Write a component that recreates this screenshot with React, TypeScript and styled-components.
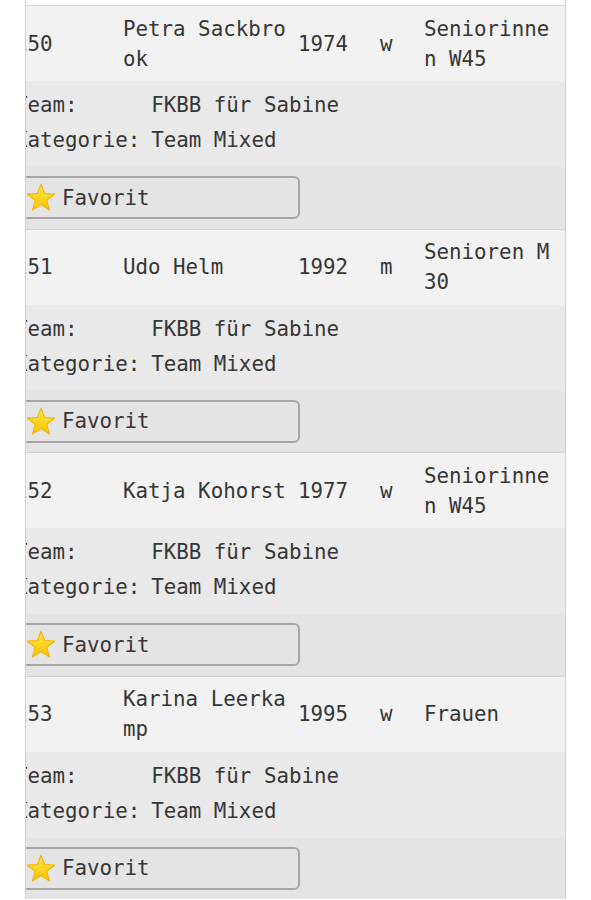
import React, { useLayoutEffect, useRef } from "react";
import styled, { createGlobalStyle } from "styled-components";

const GlobalStyle = createGlobalStyle`
  html, body {
    margin: 0;
    padding: 0;
    background: #fff;
  }
  body {
    font-family: "DejaVu Sans Mono", "Liberation Mono", monospace;
    color: #363636;
  }
`;

const Page = styled.div`
  padding-left: 25px;
  width: 541px;
`;

const Frame = styled.div`
  border-left: 1px solid #cfcfcf;
  border-right: 1px solid #cfcfcf;
  padding-top: 5px;
  overflow-x: auto;
  overflow-y: hidden;
  scrollbar-width: none;
  &::-webkit-scrollbar {
    display: none;
  }
`;

const List = styled.div`
  width: 656px;
  font-size: 20.8px;
`;

const Block = styled.div`
  border-top: 1px solid #d2d2d2;
`;

const MainRow = styled.div`
  display: grid;
  grid-template-columns: 108px 175px 82px 44px 137px 100px;
  align-items: center;
  height: 75px;
  box-sizing: border-box;
  padding: 0 0 0 10px;
  background: #f2f2f2;
  line-height: 30px;
`;

const Cell = styled.div<{ $wrap?: number }>`
  width: ${(p) => (p.$wrap ? `${p.$wrap}px` : "auto")};
  word-break: break-all;
`;

const InfoRow = styled.div`
  display: grid;
  grid-template-columns: auto 1fr;
  column-gap: 11px;
  padding: 7px 0 9px 10px;
  background: #e9e9e9;
  line-height: 35px;
  white-space: nowrap;
`;

const FavRow = styled.div`
  height: 61.5px;
  box-sizing: border-box;
  padding-top: 9px;
  background: #e4e4e4;
`;

const FavButton = styled.button`
  display: flex;
  align-items: center;
  gap: 6px;
  width: 295px;
  height: 43px;
  box-sizing: border-box;
  padding: 0 0 0 19px;
  border: 2px solid #a6a6a6;
  border-radius: 6px;
  background: #e4e4e4;
  font-family: inherit;
  font-size: 20.8px;
  color: #363636;
  cursor: pointer;
`;

const Star = () => (
  <svg width="30" height="29" viewBox="0 0 28 27">
    <defs>
      <linearGradient id="starFill" x1="0" y1="0" x2="0" y2="1">
        <stop offset="0" stopColor="#ffe14a" />
        <stop offset="1" stopColor="#f7c600" />
      </linearGradient>
    </defs>
    <polygon
      points="14,1 17.4,9.8 26.8,10.2 19.4,16.1 22,25.2 14,20 6,25.2 8.6,16.1 1.2,10.2 10.6,9.8"
      fill="url(#starFill)"
      stroke="#f0b400"
      strokeWidth="1"
      strokeLinejoin="round"
    />
  </svg>
);

type Entry = {
  nr: number;
  name: string;
  year: number;
  sex: string;
  cat: string;
  team: string;
  kategorie: string;
};

const entries: Entry[] = [
  { nr: 150, name: "Petra Sackbrook", year: 1974, sex: "w", cat: "Seniorinnen W45", team: "FKBB für Sabine", kategorie: "Team Mixed" },
  { nr: 151, name: "Udo Helm", year: 1992, sex: "m", cat: "Senioren M 30", team: "FKBB für Sabine", kategorie: "Team Mixed" },
  { nr: 152, name: "Katja Kohorst", year: 1977, sex: "w", cat: "Seniorinnen W45", team: "FKBB für Sabine", kategorie: "Team Mixed" },
  { nr: 153, name: "Karina Leerkamp", year: 1995, sex: "w", cat: "Frauen", team: "FKBB für Sabine", kategorie: "Team Mixed" },
];

export default function App(): React.ReactElement {
  const frame = useRef<HTMLDivElement>(null);

  useLayoutEffect(() => {
    if (frame.current) frame.current.scrollLeft = 21;
  }, []);

  return (
    <>
      <GlobalStyle />
      <Page>
        <Frame ref={frame}>
          <List>
            {entries.map((e) => (
              <Block key={e.nr}>
                <MainRow>
                  <Cell>{e.nr}</Cell>
                  <Cell $wrap={165}>{e.name}</Cell>
                  <Cell>{e.year}</Cell>
                  <Cell>{e.sex}</Cell>
                  <Cell $wrap={130}>{e.cat}</Cell>
                  <Cell />
                </MainRow>
                <InfoRow>
                  <span>Team:</span>
                  <span>{e.team}</span>
                  <span>Kategorie:</span>
                  <span>{e.kategorie}</span>
                </InfoRow>
                <FavRow>
                  <FavButton>
                    <Star />
                    Favorit
                  </FavButton>
                </FavRow>
              </Block>
            ))}
          </List>
        </Frame>
      </Page>
    </>
  );
}
